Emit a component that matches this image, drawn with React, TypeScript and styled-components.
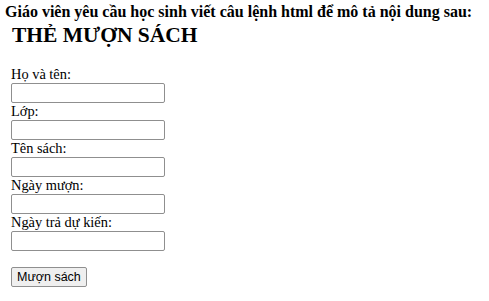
import React, { FC } from 'react';
import styled, { createGlobalStyle } from 'styled-components';

const GlobalStyle = createGlobalStyle`
  html, body {
    margin: 0;
    padding: 0;
    background: #ffffff;
  }
  body {
    font-family: "Liberation Serif", "Times New Roman", serif;
    color: #000000;
  }
`;

const Page = styled.div`
  padding: 3px 0 0 5px;
`;

const Question = styled.div`
  font-size: 16px;
  font-weight: bold;
  line-height: 18px;
  white-space: nowrap;
`;

const Title = styled.h1`
  margin: 1px 0 0 7px;
  font-size: 21.5px;
  font-weight: bold;
  line-height: 26px;
`;

const Form = styled.form`
  display: flex;
  flex-direction: column;
  align-items: flex-start;
  margin: 18px 0 0 6px;
`;

const Label = styled.label`
  font-size: 14.4px;
  line-height: 17px;
`;

const Input = styled.input`
  box-sizing: border-box;
  width: 154px;
  height: 20px;
  margin: 0;
  padding: 1px 2px;
  border: 1px solid #8f8f8f;
  border-radius: 2px;
  background: #ffffff;
`;

const Button = styled.button`
  box-sizing: border-box;
  margin-top: 16px;
  height: 20px;
  padding: 0 5px;
  font-family: "Liberation Sans", Arial, sans-serif;
  font-size: 12.5px;
  color: #000000;
  background: #efefef;
  border: 1px solid #8f8f8f;
  border-radius: 2px;
`;

const fields = ['Họ và tên:', 'Lớp:', 'Tên sách:', 'Ngày mượn:', 'Ngày trả dự kiến:'];

const App: FC = () => (
  <>
    <GlobalStyle />
    <Page>
      <Question>Giáo viên yêu cầu học sinh viết câu lệnh html để mô tả nội dung sau:</Question>
      <Title>THẺ MƯỢN SÁCH</Title>
      <Form>
        {fields.map((f, i) => (
          <React.Fragment key={i}>
            <Label>{f}</Label>
            <Input type="text" />
          </React.Fragment>
        ))}
        <Button type="button">Mượn sách</Button>
      </Form>
    </Page>
  </>
);

export default App;
